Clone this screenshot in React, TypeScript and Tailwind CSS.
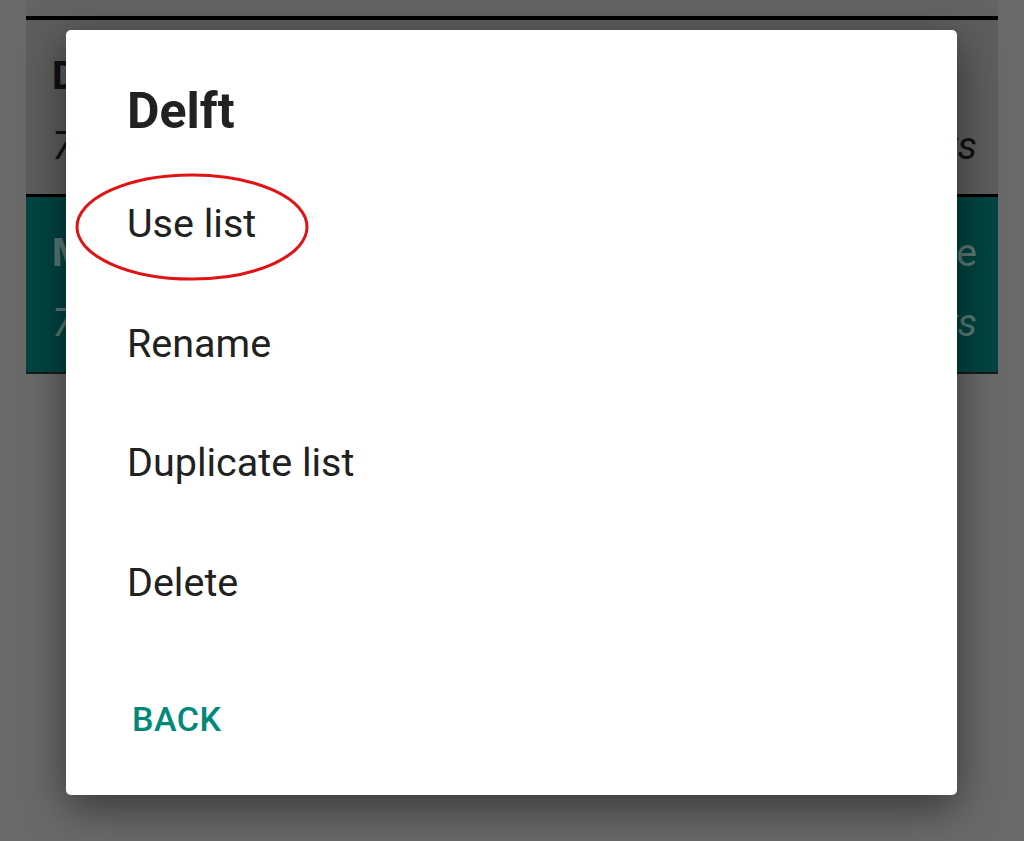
import React from "react";

type ListRow = {
  title: string;
  badge: string;
  count: string;
  age: string;
  active?: boolean;
};

const rows: ListRow[] = [
  { title: "Delft", badge: "", count: "7 words", age: "2 days", active: false },
  { title: "Mijn lijst", badge: "In use", count: "7 words", age: "5 days", active: true },
];

const actions = ["Use list", "Rename", "Duplicate list", "Delete"];

function Row({ row }: { row: ListRow }) {
  return (
    <div
      className={`flex flex-col pl-[26px] pr-[21px] pt-[21px] ${
        row.active ? "h-[175px] bg-[#004541] text-[#5c7a77]" : "h-[174px] bg-[#5e5e5e] text-[#111111]"
      }`}
    >
      <div className="flex justify-between text-[39px] leading-[70px]">
        <span className="font-bold">{row.title}</span>
        <span>{row.badge}</span>
      </div>
      <div className="flex justify-between text-[39px] leading-[70px] italic">
        <span>{row.count}</span>
        <span>{row.age}</span>
      </div>
    </div>
  );
}

export default function App() {
  return (
    <div
      className="relative h-[841px] w-full overflow-hidden bg-[#6a6a6a]"
      style={{ fontFamily: "Roboto, 'Noto Sans', sans-serif" }}
    >
      {/* dimmed list behind the dialog */}
      <div className="mx-[26px] flex flex-col">
        <div className="h-[16px] bg-[#646464]" />
        <div className="h-[4px] bg-black" />
        <Row row={rows[0]} />
        <div className="h-[3px] bg-black" />
        <Row row={rows[1]} />
        <div className="h-[2px] bg-[#1a1a1a]" />
      </div>

      {/* dialog */}
      <div className="absolute left-[66px] top-[30px] flex h-[765px] w-[891px] flex-col rounded-[5px] bg-white pl-[61px] pt-[51px] shadow-[0_12px_44px_rgba(0,0,0,0.5)]">
        <h2 className="text-[50px] font-bold leading-[60px] text-[#212121]">Delft</h2>
        <ul className="mt-[23px] flex flex-col">
          {actions.map((a) => (
            <li key={a} className="text-[39.5px] leading-[119.5px] text-[#212121]">
              {a}
            </li>
          ))}
        </ul>
        <button className="ml-[5px] mt-[57px] self-start text-[34px] font-medium uppercase leading-[40px] tracking-[0.5px] text-[#00897b]">
          Back
        </button>

        {/* hand-drawn highlight */}
        <svg
          className="pointer-events-none absolute left-[8px] top-[142px]"
          width="236"
          height="112"
          viewBox="0 0 236 112"
        >
          <ellipse cx="118" cy="55" rx="115" ry="52" fill="none" stroke="#e01414" strokeWidth="3" />
        </svg>
      </div>
    </div>
  );
}
